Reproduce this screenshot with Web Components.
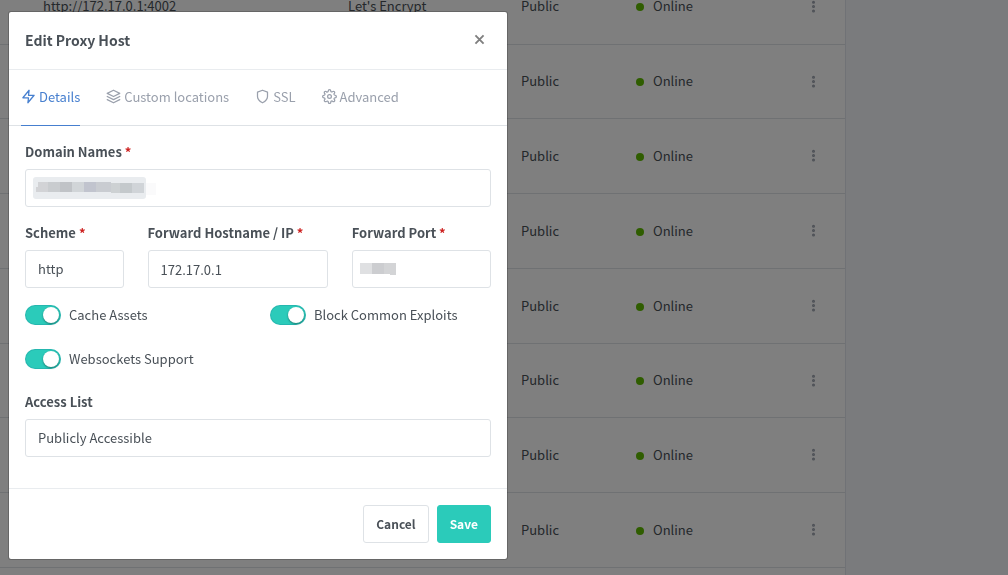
<!DOCTYPE html>
<html lang="en">
<head>
<meta charset="utf-8">
<meta name="viewport" content="width=device-width, initial-scale=1">
<title>Edit Proxy Host</title>
<style>
    :root {
        --text: #495057;
        --muted: #9aa0ac;
        --primary: #467fcf;
        --teal: #2bcbba;
        --border: #dee2e6;
        --danger: #cd201f;
    }
    body {
        margin: 0;
        min-height: 100vh;
        overflow: hidden;
        background: #f5f7fb;
        color: var(--text);
        font: 13px/20px "Noto Sans CJK SC", "Open Sans", sans-serif;
    }
</style>
</head>
<body>
<host-table></host-table>
<modal-dialog heading="Edit Proxy Host">
    <tab-bar slot="tabs">
        <tab-link icon="zap" active>Details</tab-link>
        <tab-link icon="layers">Custom locations</tab-link>
        <tab-link icon="shield">SSL</tab-link>
        <tab-link icon="settings">Advanced</tab-link>
    </tab-bar>
    <form-grid>
        <form-field label="Domain Names" kind="tags" span="12" required></form-field>
        <form-field label="Scheme" kind="select" value="http" span="3" required></form-field>
        <form-field label="Forward Hostname / IP" value="172.17.0.1" span="5" required></form-field>
        <form-field label="Forward Port" kind="masked" span="4" required></form-field>
        <toggle-switch span="6">Cache Assets</toggle-switch>
        <toggle-switch span="6">Block Common Exploits</toggle-switch>
        <toggle-switch span="12">Websockets Support</toggle-switch>
        <form-field label="Access List" kind="select" value="Publicly Accessible" span="12"></form-field>
    </form-grid>
    <action-button slot="footer">Cancel</action-button>
    <action-button slot="footer" primary>Save</action-button>
</modal-dialog>

<script>
const ICONS = {
    zap: '<polygon points="13 2 3 14 12 14 11 22 21 10 12 10 13 2"/>',
    layers: '<polygon points="12 2 2 7 12 12 22 7 12 2"/><polyline points="2 17 12 22 22 17"/><polyline points="2 12 12 17 22 12"/>',
    shield: '<path d="M12 22s8-4 8-10V5l-8-3-8 3v7c0 6 8 10 8 10z"/>',
    settings: '<circle cx="12" cy="12" r="3"/><path d="M19.4 15a1.65 1.65 0 0 0 .33 1.82l.06.06a2 2 0 0 1 0 2.83 2 2 0 0 1-2.83 0l-.06-.06a1.65 1.65 0 0 0-1.82-.33 1.65 1.65 0 0 0-1 1.51V21a2 2 0 0 1-2 2 2 2 0 0 1-2-2v-.09A1.65 1.65 0 0 0 9 19.4a1.65 1.65 0 0 0-1.82.33l-.06.06a2 2 0 0 1-2.83 0 2 2 0 0 1 0-2.83l.06-.06a1.65 1.65 0 0 0 .33-1.82 1.65 1.65 0 0 0-1.51-1H3a2 2 0 0 1-2-2 2 2 0 0 1 2-2h.09A1.65 1.65 0 0 0 4.6 9a1.65 1.65 0 0 0-.33-1.82l-.06-.06a2 2 0 0 1 0-2.83 2 2 0 0 1 2.83 0l.06.06a1.65 1.65 0 0 0 1.82.33H9a1.65 1.65 0 0 0 1-1.51V3a2 2 0 0 1 2-2 2 2 0 0 1 2 2v.09a1.65 1.65 0 0 0 1 1.51 1.65 1.65 0 0 0 1.82-.33l.06-.06a2 2 0 0 1 2.83 0 2 2 0 0 1 0 2.83l-.06.06a1.65 1.65 0 0 0-.33 1.82V9a1.65 1.65 0 0 0 1.51 1H21a2 2 0 0 1 2 2 2 2 0 0 1-2 2h-.09a1.65 1.65 0 0 0-1.51 1z"/>',
    close: '<path d="M5.5 5.5l13 13M18.5 5.5l-13 13" stroke-width="3" stroke-linecap="butt"/>',
    more: '<circle cx="12" cy="5" r="1.4"/><circle cx="12" cy="12" r="1.4"/><circle cx="12" cy="19" r="1.4"/>'
};

class LineIcon extends HTMLElement {
    constructor() {
        super();
        this.attachShadow({ mode: 'open' });
    }

    connectedCallback() {
        this.shadowRoot.innerHTML = `
            <style>
                :host { display: inline-flex; width: 15px; height: 15px; }
                svg {
                    width: 100%;
                    height: 100%;
                    fill: none;
                    stroke: currentColor;
                    stroke-width: 2;
                    stroke-linecap: round;
                    stroke-linejoin: round;
                }
            </style>
            <svg viewBox="0 0 24 24" aria-hidden="true">${ICONS[this.getAttribute('name')]}</svg>
        `;
    }
}

class HostTable extends HTMLElement {
    constructor() {
        super();
        this.attachShadow({ mode: 'open' });
        this.render();
    }

    render() {
        const hosts = [{ target: 'http://172.17.0.1:4002', ssl: "Let's Encrypt" }, {}, {}, {}, {}, {}, {}, {}];
        const rows = hosts.map(host => `
            <tr>
                <td>${host.target || ''}</td>
                <td>${host.ssl || ''}</td>
                <td>Public</td>
                <td><span class="status"></span>Online</td>
                <td><button type="button" aria-label="Actions"><line-icon name="more"></line-icon></button></td>
            </tr>`).join('');

        this.shadowRoot.innerHTML = `
            <style>
                :host {
                    display: block;
                    box-sizing: border-box;
                    height: 100vh;
                    margin-right: 162px;
                    overflow: hidden;
                    background: #fff;
                    border-right: 1px solid #e0e5ec;
                }
                table {
                    width: 100%;
                    margin-top: -31px;
                    table-layout: fixed;
                    border-collapse: collapse;
                }
                tr { height: 75px; }
                tr:nth-child(4n + 2) { height: 74px; }
                td {
                    box-sizing: border-box;
                    padding: 0;
                    border-bottom: 1px solid var(--border);
                    white-space: nowrap;
                }
                td:first-child { padding-left: 43px; }
                .status {
                    display: inline-block;
                    width: 8px;
                    height: 8px;
                    margin-right: 9px;
                    border-radius: 50%;
                    background: #5eba00;
                }
                button {
                    display: flex;
                    padding: 0;
                    border: 0;
                    background: none;
                    color: var(--muted);
                }
            </style>
            <table>
                <colgroup>
                    <col style="width: 348px"><col style="width: 173px"><col style="width: 115px"><col style="width: 170px"><col>
                </colgroup>
                <tbody>${rows}</tbody>
            </table>
        `;
    }
}

class ModalDialog extends HTMLElement {
    constructor() {
        super();
        this.attachShadow({ mode: 'open' });
    }

    connectedCallback() {
        this.shadowRoot.innerHTML = `
            <style>
                :host {
                    position: fixed;
                    inset: 0;
                    padding: 11px 8px;
                    background: rgba(0, 0, 0, 0.5);
                }
                .content {
                    box-sizing: border-box;
                    max-width: 500px;
                    background: #fff;
                    background-clip: padding-box;
                    border: 1px solid rgba(0, 0, 0, 0.2);
                    border-radius: 3px;
                }
                header {
                    display: flex;
                    align-items: center;
                    justify-content: space-between;
                    box-sizing: border-box;
                    height: 58px;
                    padding: 0 20px 2px 16px;
                    border-bottom: 1px solid #e9ecef;
                }
                h5 { margin: 0; font-size: 14px; font-weight: 700; }
                .close {
                    display: flex;
                    padding: 0;
                    border: 0;
                    background: none;
                    color: #7f7f7f;
                }
                .body { padding: 16px 16px 15px; }
                footer {
                    display: flex;
                    justify-content: flex-end;
                    gap: 8px;
                    padding: 16px;
                    border-top: 1px solid #e9ecef;
                }
            </style>
            <div class="content" role="dialog" aria-labelledby="heading">
                <header>
                    <h5 id="heading">${this.getAttribute('heading')}</h5>
                    <button class="close" type="button" aria-label="Close"><line-icon name="close"></line-icon></button>
                </header>
                <slot name="tabs"></slot>
                <div class="body"><slot></slot></div>
                <footer><slot name="footer"></slot></footer>
            </div>
        `;
    }
}

class TabBar extends HTMLElement {
    constructor() {
        super();
        this.attachShadow({ mode: 'open' });
        this.shadowRoot.innerHTML = `
            <style>
                :host { display: block; }
                nav {
                    display: flex;
                    gap: 26px;
                    padding: 0 12px;
                    border-bottom: 1px solid var(--border);
                }
            </style>
            <nav><slot></slot></nav>
        `;
    }
}

class TabLink extends HTMLElement {
    constructor() {
        super();
        this.attachShadow({ mode: 'open' });
    }

    connectedCallback() {
        this.shadowRoot.innerHTML = `
            <style>
                :host { display: block; margin-bottom: -1px; }
                a {
                    display: flex;
                    align-items: center;
                    gap: 3px;
                    box-sizing: border-box;
                    height: 56px;
                    padding-bottom: 2px;
                    border-bottom: 1px solid transparent;
                    color: var(--muted);
                    text-decoration: none;
                    white-space: nowrap;
                }
                :host([active]) { position: relative; }
                :host([active]) a { color: var(--primary); border-color: var(--primary); }
            </style>
            <a href="#"><line-icon name="${this.getAttribute('icon')}"></line-icon><slot></slot></a>
        `;
    }
}

class FormGrid extends HTMLElement {
    constructor() {
        super();
        this.attachShadow({ mode: 'open' });
        this.shadowRoot.innerHTML = `
            <style>
                :host {
                    display: grid;
                    grid-template-columns: repeat(12, minmax(0, 1fr));
                    column-gap: 24px;
                }
                ::slotted([span="3"]) { grid-column: span 3; }
                ::slotted([span="4"]) { grid-column: span 4; }
                ::slotted([span="5"]) { grid-column: span 5; }
                ::slotted([span="6"]) { grid-column: span 6; }
                ::slotted([span="12"]) { grid-column: span 12; }
            </style>
            <slot></slot>
        `;
    }
}

class FormField extends HTMLElement {
    constructor() {
        super();
        this.attachShadow({ mode: 'open' });
    }

    control() {
        const value = this.getAttribute('value') || '';
        switch (this.getAttribute('kind')) {
            case 'select':
                return `<select id="control" class="control"><option>${value}</option></select>`;
            case 'tags':
                return `
                    <div class="control tags">
                        <svg class="tag" viewBox="0 0 124 22" shape-rendering="crispEdges" aria-hidden="true">
                            <rect width="113" height="22" rx="3" fill="#e9ecef" shape-rendering="auto"/>
                            <rect x="113" y="6" width="10" height="12" fill="#fafafb"/>
                            <path fill="#d2d3d6" d="M5 5h10v10H3v-5h2z"/>
                            <path fill="#c9cccf" d="M15 5h12v10H15z"/>
                            <path fill="#c0c3c7" d="M27 5h12v10H27z"/>
                            <path fill="#d1d5d8" d="M39 5h12v10H39z"/>
                            <path fill="#c1c4ce" d="M51 5h12v10H51z"/>
                            <path fill="#c9ccd1" d="M63 5h15v10H63z"/>
                            <path fill="#cdd1d3" d="M78 6h9v10h-9z"/>
                            <path fill="#c4c9cc" d="M87 6h12v10H87z"/>
                            <path fill="#d0d4d8" d="M99 6h12v10H99z"/>
                        </svg>
                        <input id="control" type="text">
                    </div>`;
            case 'masked':
                return `
                    <div class="control tags">
                        <svg class="mask" viewBox="0 0 37 12" shape-rendering="crispEdges" aria-hidden="true">
                            <path fill="#dfe0e2" d="M0 0h12v11H0z"/>
                            <path fill="#cccdd0" d="M12 0h12v11H12z"/>
                            <path fill="#d3d4d6" d="M24 0h12v12h-6v-1h-6z"/>
                        </svg>
                        <input id="control" type="text">
                    </div>`;
            default:
                return `<input id="control" class="control" type="text" value="${value}">`;
        }
    }

    connectedCallback() {
        this.shadowRoot.innerHTML = `
            <style>
                :host { display: block; margin-bottom: 16px; }
                label {
                    display: block;
                    margin-bottom: 7px;
                    font-weight: 700;
                    white-space: nowrap;
                }
                .required { color: var(--danger); }
                .control {
                    display: block;
                    box-sizing: border-box;
                    width: 100%;
                    height: 38px;
                    padding: 0 12px;
                    border: 1px solid var(--border);
                    border-radius: 3px;
                    background: #fff;
                    color: var(--text);
                    font: inherit;
                    appearance: none;
                }
                .tags {
                    display: flex;
                    align-items: center;
                    padding: 0 7px;
                }
                .tags input {
                    flex: 1;
                    min-width: 0;
                    padding: 0;
                    border: 0;
                    outline: 0;
                    font: inherit;
                }
                .tag { width: 124px; height: 22px; }
                .mask { width: 37px; height: 12px; }
            </style>
            <label for="control">${this.getAttribute('label')}${this.hasAttribute('required') ? ' <span class="required">*</span>' : ''}</label>
            ${this.control()}
        `;
    }
}

class ToggleSwitch extends HTMLElement {
    constructor() {
        super();
        this.attachShadow({ mode: 'open' });
        this.shadowRoot.innerHTML = `
            <style>
                :host { display: block; margin-bottom: 22px; }
                label {
                    display: flex;
                    align-items: center;
                    gap: 8px;
                    height: 22px;
                    white-space: nowrap;
                }
                input {
                    display: flex;
                    justify-content: flex-end;
                    box-sizing: border-box;
                    width: 36px;
                    height: 20px;
                    margin: 0;
                    border: 1px solid rgba(0, 40, 100, 0.12);
                    border-radius: 10px;
                    background: var(--teal);
                    appearance: none;
                }
                input::before {
                    content: '';
                    width: 16px;
                    height: 16px;
                    margin: 1px;
                    border-radius: 50%;
                    background: #fff;
                    box-shadow: 0 1px 2px rgba(0, 0, 0, 0.4);
                }
                input:not(:checked) { justify-content: flex-start; background: #e9ecef; }
            </style>
            <label><input type="checkbox" checked><slot></slot></label>
        `;
    }
}

class ActionButton extends HTMLElement {
    constructor() {
        super();
        this.attachShadow({ mode: 'open' });
        this.shadowRoot.innerHTML = `
            <style>
                :host { display: block; }
                button {
                    height: 38px;
                    padding: 0 12px;
                    border: 1px solid var(--border);
                    border-radius: 3px;
                    background: #fff;
                    color: var(--text);
                    font: inherit;
                    font-size: 12px;
                    font-weight: 700;
                }
                :host([primary]) button {
                    border-color: var(--teal);
                    background: var(--teal);
                    color: #fff;
                }
            </style>
            <button type="button"><slot></slot></button>
        `;
    }
}

customElements.define('line-icon', LineIcon);
customElements.define('host-table', HostTable);
customElements.define('modal-dialog', ModalDialog);
customElements.define('tab-bar', TabBar);
customElements.define('tab-link', TabLink);
customElements.define('form-grid', FormGrid);
customElements.define('form-field', FormField);
customElements.define('toggle-switch', ToggleSwitch);
customElements.define('action-button', ActionButton);
</script>
</body>
</html>
